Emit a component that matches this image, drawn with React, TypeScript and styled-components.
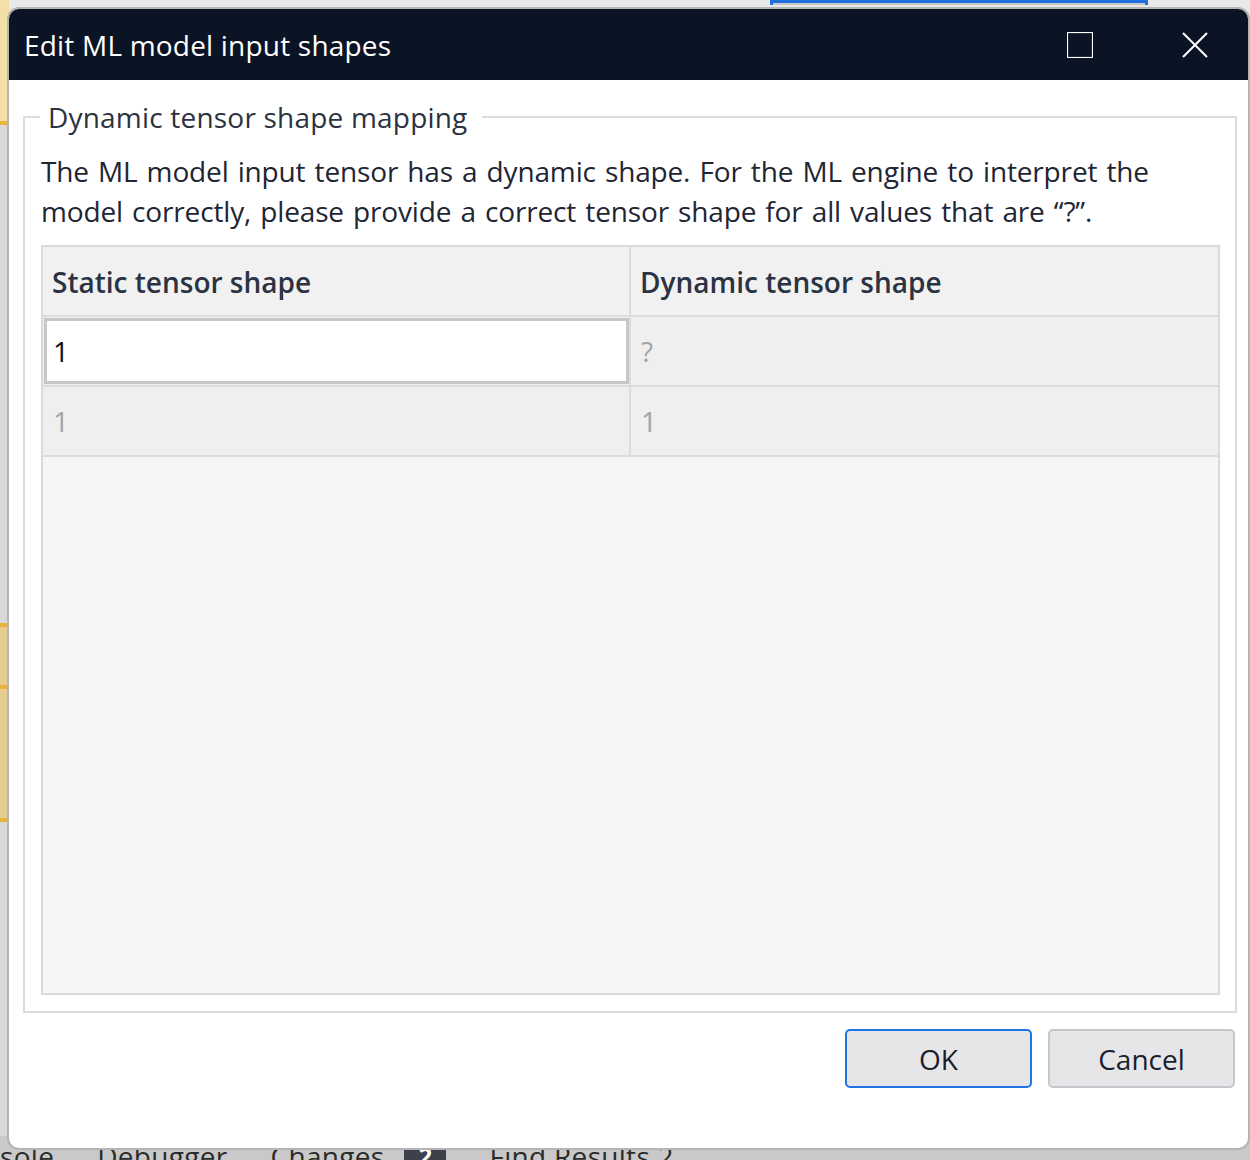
import React from "react";
import styled, { createGlobalStyle } from "styled-components";

const GlobalStyle = createGlobalStyle`
  html, body {
    margin: 0;
    padding: 0;
    background: #e4e4e4;
  }
  body {
    font-family: "Open Sans", "Noto Sans", sans-serif;
    overflow: hidden;
  }
`;

const rows = [
  { static: "1", dynamic: "?", editing: true },
  { static: "1", dynamic: "1", editing: false },
];

export default function App() {
  return (
    <Desktop>
      <GlobalStyle />
      <IdeStrip>
        <YellowMark $top={0} $height={125} />
        <YellowMark $top={623} $height={199} $split />
      </IdeStrip>
      <BlueTab />
      <TabBar>
        <TabLabel>sole</TabLabel>
        <TabLabel>Debugger</TabLabel>
        <TabLabel>
          Changes <Badge>2</Badge>
        </TabLabel>
        <TabLabel>Find Results 2</TabLabel>
      </TabBar>

      <Dialog>
        <TitleBar>
          <Title>Edit ML model input shapes</Title>
          <WindowButtons>
            <WindowButton aria-label="Maximize">
              <svg width="26" height="26" viewBox="0 0 26 26">
                <rect x="0.5" y="0.5" width="25" height="25" fill="none" stroke="#fff" strokeWidth="1.2" />
              </svg>
            </WindowButton>
            <WindowButton aria-label="Close">
              <svg width="26" height="26" viewBox="0 0 26 26">
                <path d="M1 1 L25 25 M25 1 L1 25" stroke="#fff" strokeWidth="2" />
              </svg>
            </WindowButton>
          </WindowButtons>
        </TitleBar>

        <Body>
          <Group>
            <Legend>Dynamic tensor shape mapping</Legend>
            <Description>
              The ML model input tensor has a dynamic shape. For the ML engine to interpret the
              model correctly, please provide a correct tensor shape for all values that are “?”.
            </Description>
            <Table>
              <HeadRow>
                <HeadCell>Static tensor shape</HeadCell>
                <HeadCell $last>Dynamic tensor shape</HeadCell>
              </HeadRow>
              {rows.map((r, i) => (
                <Row key={i}>
                  {r.editing ? (
                    <EditCell>
                      <CellInput defaultValue={r.static} />
                    </EditCell>
                  ) : (
                    <Cell>{r.static}</Cell>
                  )}
                  <Cell $last>{r.dynamic}</Cell>
                </Row>
              ))}
            </Table>
          </Group>

          <Footer>
            <Button $primary>OK</Button>
            <Button>Cancel</Button>
          </Footer>
        </Body>
      </Dialog>
    </Desktop>
  );
}

const Desktop = styled.div`
  position: relative;
  width: 1250px;
  height: 1160px;
  overflow: hidden;
  background: #e9e9e9;
`;

const IdeStrip = styled.div`
  position: absolute;
  left: 0;
  top: 0;
  width: 9px;
  height: 100%;
  background: #d8d8d8;
`;

const YellowMark = styled.div<{ $top: number; $height: number; $split?: boolean }>`
  position: absolute;
  left: 0;
  top: ${(p) => p.$top}px;
  width: 9px;
  height: ${(p) => p.$height}px;
  background: ${(p) => (p.$split ? "#e4cd8e" : "#f4e0a6")};
  border-top: ${(p) => (p.$split ? "4px solid #e7b53c" : "none")};
  border-bottom: 4px solid #e7b53c;
  box-sizing: border-box;
  ${(p) =>
    p.$split &&
    `&::after {
      content: "";
      position: absolute;
      left: 0;
      top: 58px;
      width: 9px;
      height: 4px;
      background: #e7b53c;
    }`}
`;

const BlueTab = styled.div`
  position: absolute;
  left: 770px;
  top: 0;
  width: 378px;
  height: 5px;
  background: #c9c9c9;
  border-top: 3px solid #1f6fe0;
  border-left: 3px solid #1f6fe0;
  border-right: 3px solid #1f6fe0;
  box-sizing: border-box;
`;

const TabBar = styled.div`
  position: absolute;
  left: 0;
  top: 1136px;
  width: 100%;
  height: 40px;
  display: flex;
  align-items: center;
  gap: 43px;
  background: #c9c9c9;
  font-size: 28px;
  letter-spacing: 0.3px;
  color: #2b2b2b;
`;

const TabLabel = styled.span`
  display: flex;
  align-items: center;
  gap: 20px;
  white-space: nowrap;
`;

const Badge = styled.span`
  display: inline-block;
  width: 42px;
  height: 32px;
  border-radius: 5px;
  background: #3c414c;
  color: #fff;
  font-size: 24px;
  font-weight: 700;
  text-align: center;
  line-height: 32px;
`;

const Dialog = styled.div`
  position: absolute;
  left: 7px;
  top: 7px;
  width: 1243px;
  height: 1143px;
  display: flex;
  flex-direction: column;
  background: #fff;
  border: 2px solid #b4b4b4;
  border-radius: 12px;
  overflow: hidden;
  box-sizing: border-box;
`;

const TitleBar = styled.div`
  height: 71px;
  flex: none;
  display: flex;
  align-items: center;
  justify-content: space-between;
  background: #0b1424;
  padding-left: 15px;
`;

const Title = styled.div`
  color: #fff;
  font-size: 28px;
  letter-spacing: 0.2px;
`;

const WindowButtons = styled.div`
  display: flex;
  align-items: center;
  gap: 89px;
  padding-right: 40px;
`;

const WindowButton = styled.div`
  width: 26px;
  height: 26px;
  display: flex;
`;

const Body = styled.div`
  flex: 1;
  display: flex;
  flex-direction: column;
  padding: 19px 11px 0 14px;
`;

const Group = styled.fieldset`
  margin: 0;
  padding: 0 15px 16px 16px;
  border: 2px solid #dcdcdc;
  min-width: 0;
  display: flex;
  flex-direction: column;
`;

const Legend = styled.legend`
  margin-left: -1px;
  padding: 0 14px 0 8px;
  font-size: 28px;
  line-height: 36px;
  color: #2b3240;
  letter-spacing: 0.2px;
`;

const Description = styled.p`
  margin: 16px 0 14px 0;
  font-size: 28px;
  line-height: 40px;
  color: #1e2533;
  letter-spacing: -0.15px;
  word-spacing: 2px;
`;

const Table = styled.div`
  height: 750px;
  box-sizing: border-box;
  border: 2px solid #dadada;
  background: #f6f6f6;
  display: flex;
  flex-direction: column;
`;

const HeadRow = styled.div`
  display: grid;
  grid-template-columns: 588px 1fr;
  height: 70px;
  background: #f1f1f1;
  border-bottom: 2px solid #dcdcdc;
  box-sizing: border-box;
`;

const HeadCell = styled.div<{ $last?: boolean }>`
  display: flex;
  align-items: center;
  padding: 2px 0 0 9px;
  font-size: 28px;
  font-weight: 600;
  color: #2b3343;
  border-right: ${(p) => (p.$last ? "none" : "2px solid #dcdcdc")};
`;

const Row = styled.div`
  display: grid;
  grid-template-columns: 588px 1fr;
  height: 70px;
  background: #efefef;
  border-bottom: 2px solid #dcdcdc;
  box-sizing: border-box;
`;

const Cell = styled.div<{ $last?: boolean }>`
  display: flex;
  align-items: center;
  padding-left: 10px;
  font-size: 28px;
  color: #a0a4ab;
  border-right: ${(p) => (p.$last ? "none" : "2px solid #dcdcdc")};
`;

const EditCell = styled.div`
  display: flex;
  padding: 1px 0 1px 1px;
  border-right: 2px solid #dcdcdc;
`;

const CellInput = styled.input`
  flex: 1;
  min-width: 0;
  margin: 0;
  border: 3px solid #c6c7cb;
  background: #fff;
  padding: 0 0 0 6px;
  font-family: inherit;
  font-size: 28px;
  color: #111;
  outline: none;
`;

const Footer = styled.div`
  display: flex;
  justify-content: flex-end;
  gap: 16px;
  margin-top: 16px;
  padding-right: 2px;
`;

const Button = styled.button<{ $primary?: boolean }>`
  width: 187px;
  height: 59px;
  border-radius: 5px;
  border: 2px solid ${(p) => (p.$primary ? "#1f74e6" : "#c6c7cc")};
  background: #e6e6e9;
  font-family: inherit;
  font-size: 28px;
  color: #1a1f2b;
  padding: 0;
`;
